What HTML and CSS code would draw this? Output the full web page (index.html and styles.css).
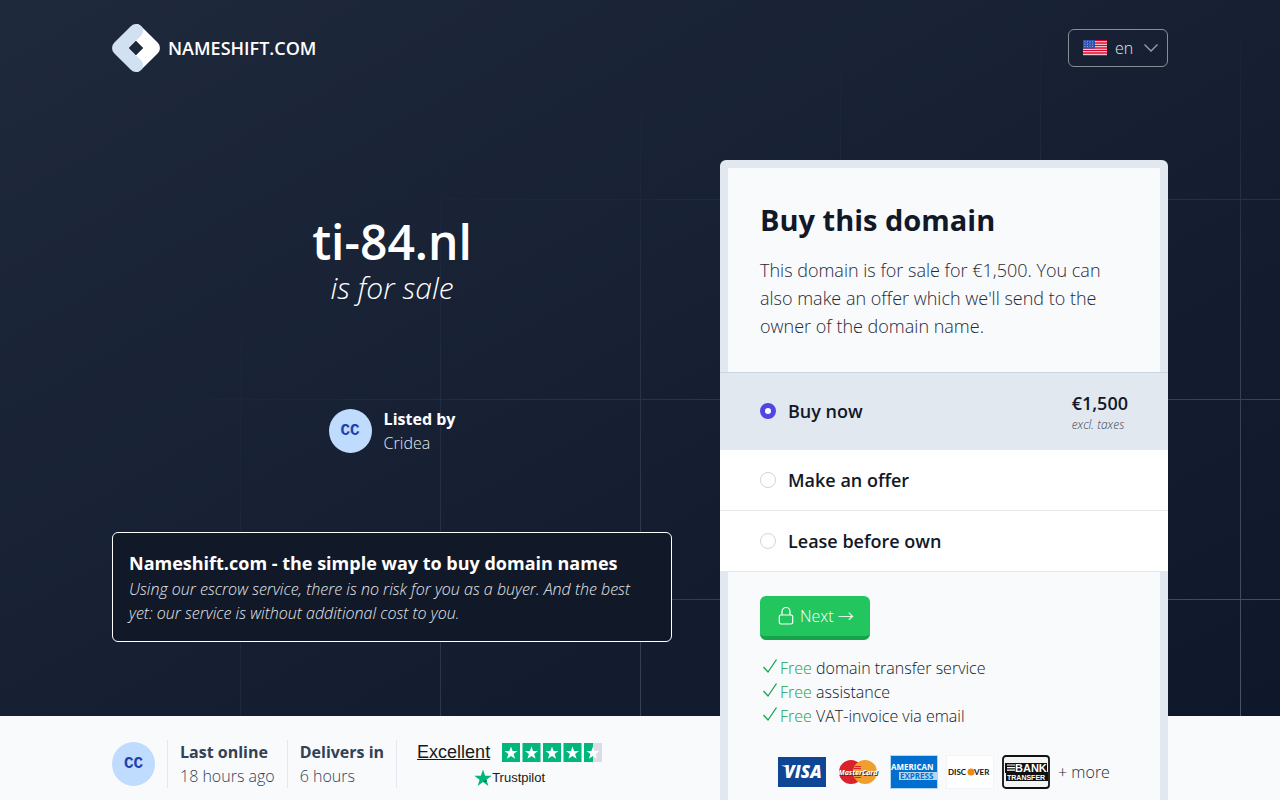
FILE: index.html
```html
<!DOCTYPE html>
<html lang="en">
<head>
  <meta charset="UTF-8">
  <meta name="viewport" content="width=device-width, initial-scale=1.0">
  <title>ti-84.nl is for sale</title>
  <link rel="stylesheet" href="styles.css">
</head>
<body>
  <div class="hero">
    <!-- Header -->
    <header class="container header">
      <a href="#" class="brand">
        <svg class="brand-logo" viewBox="0 0 48 48" aria-hidden="true">
          <path fill="#fff" d="M24 0c2 0 3.800 .8 5.200 2.200L45.800 18.800a7.300 7.300 0 0 1 0 10.400L29.200 45.800A7.300 7.300 0 0 1 24 48l-4-12 4-5 7-7-7-7-4-5z"/>
          <path fill="#d2e1f2" d="M24 0a7.300 7.300 0 0 0-5.200 2.200L2.200 18.800a7.300 7.300 0 0 0 0 10.400l16.600 16.600a7.300 7.300 0 0 0 10.400 0c2.500-2.600 2.500-6.500 0-9.200L17 24l12.200-12.600c2.500-2.700 2.500-6.600 0-9.200A7.300 7.300 0 0 0 24 0z"/>
          <path fill="#1c2739" d="M24 17l7 7-7 7-7-7z"/>
        </svg>
        <span>NAMESHIFT.COM</span>
      </a>
      <label class="lang">
        <svg class="flag" viewBox="0 0 24 16" aria-hidden="true">
          <rect width="24" height="16" fill="#fff"/>
          <path stroke="#d80027" stroke-width="1.300" d="M0 .6h24M0 3h24M0 5.500h24M0 8h24M0 10.500h24M0 13h24M0 15.400h24"/>
          <rect width="12" height="8.600" fill="#2e52b2"/>
          <path stroke="#b9c6ea" stroke-width=".8" stroke-dasharray="1 1.500" d="M1.500 1.800h10M1.500 4.200h10M1.500 6.600h10"/>
        </svg>
        <select aria-label="Language">
          <option>en</option>
          <option>nl</option>
        </select>
        <svg class="chevron" viewBox="0 0 16 16" aria-hidden="true"><path d="M1.500 4.500L8 11l6.500-6.500"/></svg>
      </label>
    </header>

    <main class="container columns">
      <!-- Domain -->
      <section class="intro">
        <h1>ti-84.nl</h1>
        <p class="tagline">is for sale</p>
        <div class="seller">
          <span class="avatar">CC</span>
          <div>
            <strong>Listed by</strong>
            <span>Cridea</span>
          </div>
        </div>
        <div class="notice">
          <h3>Nameshift.com - the simple way to buy domain names</h3>
          <p>Using our escrow service, there is no risk for you as a buyer. And the best yet: our service is without additional cost to you.</p>
        </div>
      </section>

      <!-- Buy card -->
      <form class="card">
        <div class="card-head">
          <h2>Buy this domain</h2>
          <p>This domain is for sale for €1,500. You can also make an offer which we'll send to the owner of the domain name.</p>
        </div>
        <div class="options">
          <label class="option active">
            <input type="radio" name="type" checked>
            <span>Buy now</span>
            <span class="price">€1,500<small>excl. taxes</small></span>
          </label>
          <label class="option">
            <input type="radio" name="type">
            <span>Make an offer</span>
          </label>
          <label class="option">
            <input type="radio" name="type">
            <span>Lease before own</span>
          </label>
        </div>
        <div class="card-body">
          <button type="button" class="next">
            <svg viewBox="0 0 20 20" aria-hidden="true"><path d="M6 9V5.500a4 4 0 0 1 8 0V9M5 9h10a1.700 1.700 0 0 1 1.700 1.700v5.600A1.700 1.700 0 0 1 15 18H5a1.700 1.700 0 0 1-1.700-1.700v-5.600A1.700 1.700 0 0 1 5 9z"/></svg>
            <span>Next →</span>
          </button>
          <ul class="perks">
            <li><svg viewBox="0 0 20 20" aria-hidden="true"><path d="M3.500 11L8 16l8.500-12.500"/></svg><p><em>Free</em> domain transfer service</p></li>
            <li><svg viewBox="0 0 20 20" aria-hidden="true"><path d="M3.500 11L8 16l8.500-12.500"/></svg><p><em>Free</em> assistance</p></li>
            <li><svg viewBox="0 0 20 20" aria-hidden="true"><path d="M3.500 11L8 16l8.500-12.500"/></svg><p><em>Free</em> VAT-invoice via email</p></li>
          </ul>
          <div class="payments">
            <svg viewBox="0 0 48 34">
              <rect y="2" width="48" height="30" fill="#0e4595"/>
              <text class="pay-visa" x="25" y="23" text-anchor="middle">VISA</text>
              <path fill="#fff" d="M3 10.500h6l2 6-2-3.500c-2-1.500-4-2-6-2.500z"/>
            </svg>
            <svg viewBox="0 0 48 34">
              <circle cx="17" cy="17" r="12" fill="#d9222a"/>
              <circle cx="31" cy="17" r="12" fill="#ee9f2d"/>
              <path stroke="#d9222a" d="M21 11.500h6M20 13.500h7M20 20.500h7M21 22.500h6"/>
              <text class="pay-mc pay-mc-shade" x="25" y="21" text-anchor="middle">MasterCard</text>
              <text class="pay-mc" x="24" y="20" text-anchor="middle">MasterCard</text>
            </svg>
            <svg viewBox="0 0 48 34">
              <rect x=".5" y=".5" width="47" height="33" fill="#016fd0" stroke="#b5d5f0"/>
              <text class="pay-amex" x="1" y="15">AMERICAN</text>
              <rect x="9" y="17" width="38" height="8" fill="#b5d5f0"/>
              <text class="pay-amex pay-amex-blue" x="10" y="24">EXPRESS</text>
            </svg>
            <svg viewBox="0 0 48 34">
              <rect x=".5" y=".5" width="47" height="33" fill="#fff" stroke="#f3f4f6"/>
              <text class="pay-discover" x="2" y="20">DISC</text>
              <circle cx="25" cy="17" r="3.500" fill="#f08a12"/>
              <text class="pay-discover" x="28" y="20">VER</text>
            </svg>
            <svg viewBox="0 0 48 34">
              <rect x="1" y="1" width="46" height="32" rx="3" fill="#f3f4f6" stroke="#111" stroke-width="1.800"/>
              <path fill="#111" d="M3 8h42v9h1v9H4v-8H3z"/>
              <path stroke="#fff" stroke-width="1.200" d="M5 10h8M5 12.600h8M5 15.200h8"/>
              <text class="pay-bank" x="13" y="17">BANK</text>
              <text class="pay-transfer" x="5" y="25">TRANSFER</text>
            </svg>
            <span>+ more</span>
          </div>
        </div>
      </form>
    </main>
  </div>

  <!-- Trust bar -->
  <section class="container trust">
    <div class="trust-item"><span class="avatar">CC</span></div>
    <div class="trust-item stat">
      <strong>Last online</strong>
      <span>18 hours ago</span>
    </div>
    <div class="trust-item stat">
      <strong>Delivers in</strong>
      <span>6 hours</span>
    </div>
    <div class="trust-item trustpilot">
      <div class="rating">
        <a href="#">Excellent</a>
        <svg viewBox="0 0 100 19" role="img" aria-label="4.5 out of 5 stars">
          <defs><path id="star" d="M0-6.500l1.600 4.600h4.900L2.600 1l1.500 4.800L0 3l-4.100 2.800L-2.600 1l-3.900-2.900h4.900z"/></defs>
          <path fill="#00b67a" d="M0 0h18v19H0zM20.500 0h18v19h-18zM41 0h18v19H41zM61.500 0h18v19h-18zM82 0h9v19h-9z"/>
          <path fill="#dcdce6" d="M91 0h9v19h-9z"/>
          <g fill="#fff">
            <use href="#star" x="9" y="10"/>
            <use href="#star" x="29.500" y="10"/>
            <use href="#star" x="50" y="10"/>
            <use href="#star" x="70.500" y="10"/>
            <use href="#star" x="91" y="10"/>
          </g>
        </svg>
      </div>
      <a href="#" class="tp-brand">
        <svg viewBox="0 0 18 18" aria-hidden="true">
          <path fill="#00b67a" d="M9 .5l2.100 6.200h6.600l-5.300 4 2 6.300L9 13.100 3.600 17l2-6.300-5.300-4h6.600z"/>
          <path fill="#005128" d="M12.800 12.200l-.5-1.400L9 13.100z"/>
        </svg>
        <span>Trustpilot</span>
      </a>
    </div>
  </section>
</body>
</html>
```
FILE: styles.css
```css
/* Global Styles */
* {
  box-sizing: border-box;
}

body {
  font-family: 'Open Sans', 'Noto Sans CJK SC', sans-serif;
  font-size: 16px;
  font-weight: 300;
  line-height: 24px;
  background: #f8fafc;
  color: #111827;
  margin: 0;
}

h1, h2, h3, p, ul {
  margin: 0;
  padding: 0;
}

svg {
  display: block;
  flex-shrink: 0;
}

.container {
  max-width: 1056px;
  margin: 0 auto;
}

/* Hero with faded grid lines */
.hero {
  position: relative;
  background: linear-gradient(to bottom right, #1e293b, #0f172a);
  padding-bottom: 74px;
}

.hero::before {
  content: '';
  position: absolute;
  inset: 0;
  background-image:
    linear-gradient(to right, #475569 1px, transparent 1px),
    linear-gradient(to bottom, #475569 1px, transparent 1px);
  background-size: 200px 200px;
  background-position: 40px -1px;
  mask-image:
    linear-gradient(to bottom right, transparent 25%, #000),
    linear-gradient(to right, transparent 4%, #000 40%),
    linear-gradient(to bottom, transparent, #000 40%);
  mask-composite: intersect;
}

.header, .columns {
  position: relative;
}

/* Header */
.header {
  display: flex;
  align-items: center;
  justify-content: space-between;
  padding: 24px 0;
}

.brand {
  display: flex;
  align-items: center;
  gap: 8px;
  color: #fff;
  font-size: 18px;
  font-weight: 600;
  text-decoration: none;
}

.brand-logo {
  width: 48px;
  height: 48px;
}

.lang {
  display: flex;
  align-items: center;
  border: 1px solid #868f94;
  border-radius: 6px;
  padding: 6px 8px 6px 14px;
  color: #e5e7eb;
}

.lang select {
  appearance: none;
  background: none;
  border: 0;
  padding: 0;
  margin: 0 9px 0 8px;
  color: inherit;
  font: inherit;
}

.flag {
  width: 24px;
  height: 16px;
}

.chevron {
  width: 16px;
  height: 16px;
  fill: none;
  stroke: #9ca3af;
  stroke-width: 1.3;
}

/* Columns */
.columns {
  display: grid;
  grid-template-columns: 5fr 4fr;
  gap: 48px;
  align-items: start;
  padding-top: 64px;
}

.intro {
  display: flex;
  flex-direction: column;
  align-items: center;
  padding-top: 58px;
  color: #fff;
}

h1 {
  font-size: 48px;
  font-weight: 600;
  line-height: 48px;
}

.tagline {
  margin-top: 4px;
  font-size: 30px;
  font-style: oblique 10deg;
  line-height: 36px;
}

.seller {
  display: flex;
  align-items: center;
  gap: 12px;
  margin-top: 101px;
}

.seller strong, .seller span, .stat strong, .stat span {
  display: block;
}

.seller strong, .stat strong {
  font-weight: 700;
}

.seller div span {
  color: #e5e7eb;
}

.avatar {
  width: 43px;
  height: 44px;
  border-radius: 50%;
  background: #bfdbfe;
  color: #1e40af;
  font-family: 'Liberation Mono', monospace;
  font-weight: 700;
  line-height: 44px;
  text-align: center;
}

.notice {
  width: 100%;
  margin-top: 77px;
  padding: 16px;
  border: 1px solid #fff;
  border-radius: 6px;
  background: #111827;
}

.notice h3 {
  font-size: 18px;
  font-weight: 700;
  line-height: 28px;
}

.notice p {
  color: #e5e7eb;
  font-style: oblique 20deg;
}

/* Buy card, hangs over the trust bar */
.card {
  margin-bottom: -280px;
  border: 8px solid #e2e8f0;
  border-radius: 6px;
  background: #f8fafc;
}

.card-head {
  padding: 32px 32px;
}

.card-head h2 {
  font-size: 29px;
  font-weight: 700;
  line-height: 40px;
}

.card-head p {
  margin-top: 16px;
  color: #1f2937;
  font-size: 18px;
  line-height: 28px;
}

.options {
  margin: 0 -8px;
  border-top: 1px solid #cbd5e1;
}

.option {
  display: flex;
  align-items: center;
  gap: 12px;
  padding: 16px 40px;
  border-bottom: 1px solid #e5e7eb;
  background: #fff;
  font-size: 18px;
  font-weight: 600;
  line-height: 28px;
}

.option.active {
  background: #e2e8f0;
  border-color: #e2e8f0;
}

.option input {
  appearance: none;
  width: 16px;
  height: 16px;
  margin: 0;
  border: 1px solid #d1d5db;
  border-radius: 50%;
  background: #fff;
}

.option input:checked {
  border: 5px solid #4f46e5;
}

.price {
  margin-left: auto;
}

.price small {
  display: block;
  color: #374151;
  font-size: 12px;
  font-style: oblique;
  font-weight: 300;
  line-height: 16px;
}

.card-body {
  padding: 24px 32px 32px;
}

.next {
  display: flex;
  align-items: center;
  gap: 4px;
  padding: 8px 16px;
  border: 0;
  border-bottom: 4px solid #16a34a;
  border-radius: 6px;
  background: #22c55e;
  color: #fff;
  font: inherit;
}

.next svg {
  width: 20px;
  height: 20px;
  fill: none;
  stroke: #fff;
  stroke-width: 1.2;
}

.perks {
  margin-top: 16px;
  list-style: none;
}

.perks li {
  display: flex;
}

.perks svg {
  width: 20px;
  height: 20px;
  fill: none;
  stroke: #16a34a;
  stroke-width: 1.3;
}

.perks em {
  color: #16a34a;
  font-style: normal;
}

.payments {
  display: flex;
  align-items: center;
  justify-content: center;
  gap: 8px;
  margin-top: 27px;
  color: #1f2937;
}

.payments svg {
  width: 48px;
  height: 34px;
}

.pay-visa {
  fill: #fff;
  font: italic 800 17px 'Open Sans', sans-serif;
}

.pay-mc {
  fill: #fff;
  font: italic 700 7px 'Open Sans', sans-serif;
}

.pay-mc-shade {
  fill: #333;
}

.pay-amex {
  fill: #fff;
  font: 700 8px 'Open Sans', sans-serif;
}

.pay-amex-blue {
  fill: #016fd0;
}

.pay-discover {
  fill: #111;
  font: 700 8px Lato, sans-serif;
}

.pay-bank {
  fill: #fff;
  font: 700 11px 'Liberation Sans', sans-serif;
}

.pay-transfer {
  fill: #fff;
  font: 700 7px 'Liberation Sans', sans-serif;
}

/* Trust bar */
.trust {
  display: flex;
  align-items: center;
  padding: 24px 0 96px;
}

.trust-item {
  display: flex;
  align-items: center;
  height: 48px;
  padding-right: 12px;
}

.trust-item + .trust-item {
  border-left: 1px solid #e2e8f0;
  padding-left: 12px;
}

.trust-item.stat {
  display: block;
  color: #334155;
}

.trust-item.trustpilot {
  flex-direction: column;
  justify-content: space-between;
  padding-left: 20px;
  font-family: 'Liberation Sans', Arial, sans-serif;
}

.trustpilot a {
  color: #191919;
}

.rating {
  display: flex;
  align-items: center;
  gap: 12px;
  font-size: 18px;
  font-weight: 400;
}

.rating svg {
  width: 100px;
  height: 19px;
}

.tp-brand {
  display: flex;
  align-items: center;
  font-size: 13px;
  font-weight: 400;
  line-height: 20px;
  text-decoration: none;
}

.tp-brand svg {
  width: 18px;
  height: 18px;
}
```
